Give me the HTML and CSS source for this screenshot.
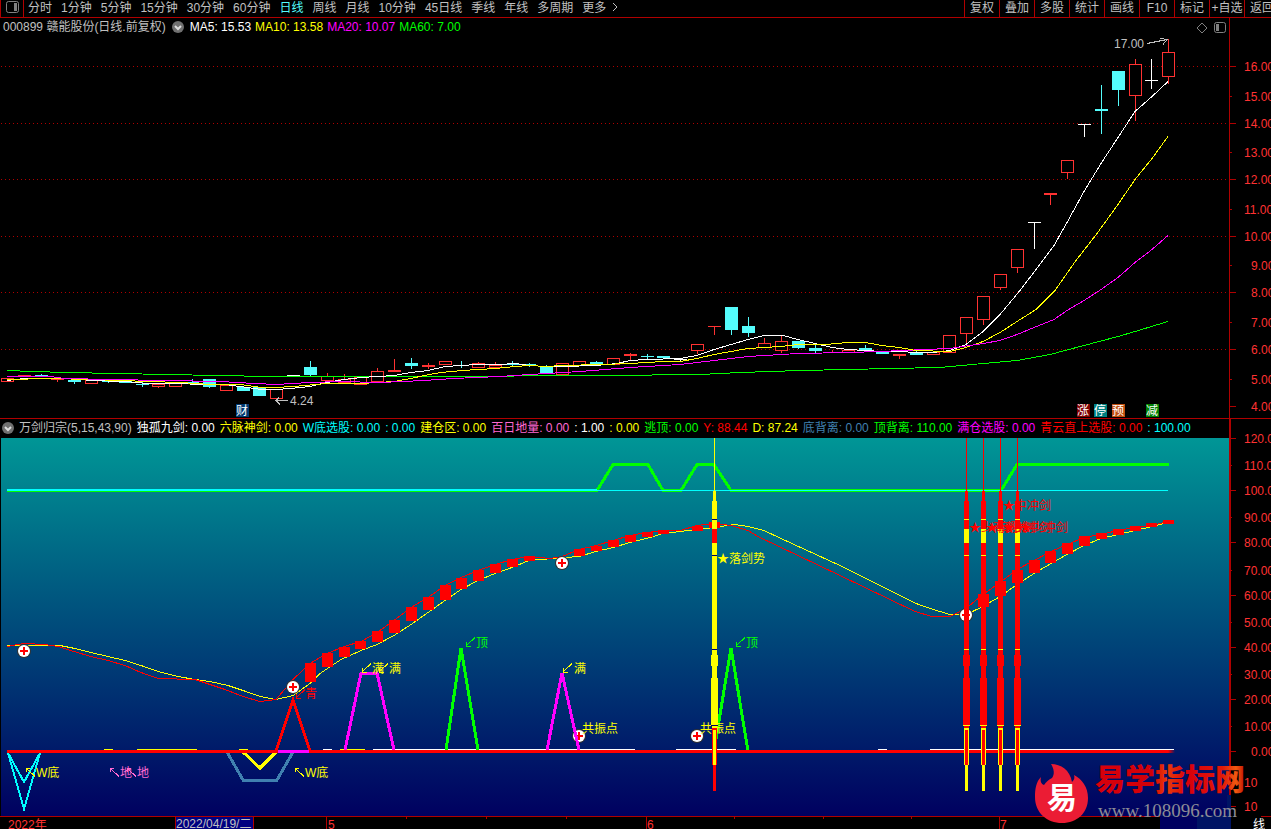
FILE: index.html
```html
<!DOCTYPE html>
<html lang="zh-CN">
<head>
  <meta charset="UTF-8" />
  <meta name="viewport" content="width=device-width, initial-scale=1.0"/>
  <title>赣能股份 000899 日线</title>
  <link rel="stylesheet" href="styles.css">
</head>
<body>

<nav class="toolbar">
  <button class="layout-btn" aria-label="布局">
    <svg width="13" height="12" viewBox="0 0 13 12"><rect x=".5" y=".5" width="12" height="11" rx="2"/><rect class="solid" x="8" y="2" width="3" height="8"/></svg>
  </button>
  <div class="periods">
    <button>分时</button><button>1分钟</button><button>5分钟</button><button>15分钟</button><button>30分钟</button><button>60分钟</button><button class="active">日线</button><button>周线</button><button>月线</button><button>10分钟</button><button>45日线</button><button>季线</button><button>年线</button><button>多周期</button><button class="more">更多<svg width="6" height="10" viewBox="0 0 6 10"><path d="M1 1l4 4-4 4"/></svg></button>
  </div>
  <div class="tools">
    <button>复权</button><button>叠加</button><button>多股</button><button>统计</button><button>画线</button><button>F10</button><button>标记</button><button>+自选</button><button class="cut">返回</button>
  </div>
</nav>

<main>
  <section class="pane price">
    <header class="legend">
      <span>000899 赣能股份(日线.前复权)</span>
      <button class="drop" aria-label="展开"><svg width="12" height="12" viewBox="0 0 12 12"><circle cx="6" cy="6" r="6"/><path d="M3 5l3 3 3-3"/></svg></button>
      <span class="white">MA5: 15.53</span>
      <span class="yellow">MA10: 13.58</span>
      <span class="magenta">MA20: 10.07</span>
      <span class="green">MA60: 7.00</span>
      <span class="pane-tools">
        <svg width="12" height="12" viewBox="0 0 12 12"><path d="M6 1l5 5-5 5-5-5z"/></svg>
        <svg width="12" height="12" viewBox="0 0 12 12"><rect x=".5" y=".5" width="11" height="10" rx="2"/><rect class="solid" x="2" y="2" width="3" height="7"/></svg>
      </span>
    </header>
    <svg class="chart" viewBox="0 38 1271 380">
      <g class="grid">
        <path d="M1 66.5H1229M1 123.5H1229M1 179.5H1229M1 236.5H1229M1 292.5H1229M1 349.5H1229"/>
      </g>
      <g id="candles"></g>
      <g class="ma" transform="translate(0 .5)">
        <polyline class="s-green" points="7,370 33,371 66,372 117,373 167,374 217,375 270,376 424,376 605,375 700,374 740,372 800,370 848,369 890,368 940,367 983,363 1017,360 1050,354 1084,345 1118,336 1135,331 1168,321"/>
        <polyline class="s-white" points="7,380 24,378 75,378 90,380 125,381 147,383 175,383 205,384 225,384 240,386 262,389 276,389 290,388 310,386 327,382 344,379 361,377 378,376 394,375 411,372 428,370 445,366 461,365 478,364 500,364 515,363 530,365 546,366 562,366 596,365 617,363 630,360 647,359 680,358 697,355 714,349 731,344 748,339 764,335 783,335 798,339 815,343 832,347 848,349 865,350 882,351 899,351 916,352 933,352 950,350 966,344 983,331 1000,314 1020,290 1036,269 1054,245 1067,222 1084,191 1101,163 1118,137 1135,111 1152,96 1168,81"/>
        <polyline class="s-yellow" points="7,379 50,378 90,379 120,380 150,381 180,382 210,384 240,384 262,387 276,387 293,386 327,383 361,383 394,381 411,378 424,375 441,372 462,370 495,368 515,366 530,365 546,366 562,365 600,364 630,363 663,361 680,361 697,358 714,354 731,351 748,348 764,347 781,346 798,344 825,344 848,342 865,342 882,345 899,347 916,350 950,351 966,347 983,341 1000,332 1017,321 1036,309 1055,290 1076,260 1097,233 1118,204 1135,179 1152,158 1168,136"/>
        <polyline class="s-magenta" points="7,376 50,376 65,378 110,379 165,380 220,381 255,383 276,384 310,382 340,381 380,382 424,380 453,378 500,376 530,374 580,371 630,367 680,364 697,362 748,356 798,353 848,352 880,351 925,349 950,348 983,343 1000,340 1017,334 1034,327 1054,319 1067,310 1084,300 1101,289 1118,277 1135,262 1152,249 1168,235"/>
      </g>
      <g class="note">
        <text x="1114" y="48">17.00</text>
        <path d="M1147 43.5l20-4M1160 38.5l7 1-4 5"/>
        <text x="290" y="405">4.24</text>
        <path d="M288 400.5h-12M279 397.5l-3 3 4 4"/>
      </g>
      <g class="badges">
        <rect x="236" y="404" width="13" height="13" fill="#003870"/><text x="236" y="415">财</text>
        <rect x="1077" y="404" width="13" height="13" fill="#800000"/><text x="1077" y="415">涨</text>
        <rect x="1094" y="404" width="13" height="13" fill="#008080"/><text x="1094" y="415">停</text>
        <rect x="1112" y="404" width="13" height="13" fill="#c04f10"/><text x="1112" y="415">预</text>
        <rect x="1146" y="404" width="13" height="13" fill="#008000"/><text x="1146" y="415">减</text>
      </g>
      <g id="priceAxis" class="axis"><path d="M1229.5 38V418"/></g>
    </svg>
  </section>

  <section class="pane indicator">
    <header class="legend">
      <button class="drop" aria-label="展开"><svg width="12" height="12" viewBox="0 0 12 12"><circle cx="6" cy="6" r="6"/><path d="M3 5l3 3 3-3"/></svg></button>
      <span>万剑归宗(5,15,43,90)</span>
      <span class="white">独孤九剑: 0.00</span>
      <span class="yellow">六脉神剑: 0.00</span>
      <span class="cyan">W底选股: 0.00</span>
      <span class="cyan">: 0.00</span>
      <span class="yellow">建仓区: 0.00</span>
      <span class="pink">百日地量: 0.00</span>
      <span class="white">: 1.00</span>
      <span class="yellow">: 0.00</span>
      <span class="green">逃顶: 0.00</span>
      <span class="red">Y: 88.44</span>
      <span class="yellow">D: 87.24</span>
      <span class="steel">底背离: 0.00</span>
      <span class="green">顶背离: 110.00</span>
      <span class="magenta">满仓选股: 0.00</span>
      <span class="red">青云直上选股: 0.00</span>
      <span class="cyan">: 100.00</span>
    </header>
    <svg class="chart" viewBox="0 438 1271 378">
      <defs>
        <linearGradient id="sea" x1="0" y1="0" x2="0" y2="1">
          <stop offset="0" stop-color="#009696"/>
          <stop offset="1" stop-color="#000060"/>
        </linearGradient>
        <linearGradient id="fade"><stop offset="0" stop-color="#f00"/><stop offset="1" stop-color="#f00" stop-opacity="0"/></linearGradient>
        <g id="sword">
          <path class="blade" d="M-1 491h3v10h-3zM-2 501h5v227h-5zM-3 655h7v11h-7zM-3 678h7v47h-7z"/>
          <path class="trim" d="M-2 529h5v14h-5zM-2 728h5v37h-5z"/>
          <path class="blade" d="M-1 730h3v35h-3z"/>
          <path class="trim" d="M-1 765h3v26h-3z"/>
          <path class="mark" d="M-2 519h5v1h-5zM-2 555h5v1h-5zM-2 649h5v1h-5zM-3 725h7v1h-7z"/>
        </g>
        <g id="cross">
          <circle r="7" fill="#333"/><circle r="6" fill="#fff"/>
          <path d="M-4 0h8M0-4v8" stroke="#f00" stroke-width="2"/>
        </g>
        <path id="arrowDown" d="M10 0.5L1 9M1 5v4h5"/>
        <path id="arrowUp" d="M10 9.5L1 1M1 5v-4h4"/>
      </defs>
      <rect x="1" y="438" width="1228" height="378" fill="url(#sea)"/>

      <g class="thick">
        <polyline class="s-green" points="7,490.5 597,490.5 613,464.5 648,464.5 663,490.5 681,490.5 697,464.5 714,464.5 731,490.5 1001,490.5 1017,464.5 1169,464.5"/>
      </g>
      <path class="s-cyan pair" d="M7 490H597"/>
      <path class="s-cyan" d="M597 490.5H1168"/>

      <g transform="translate(0 .5)">
        <polyline class="s-yellow" points="7,645 24,645 60,645 75,648 91,652 108,656 125,660 141,665 158,671 178,676 195,679 210,681 228,685 243,690 260,696 276,699 293,695 310,683 320,673 341,659 361,650 377,644 394,635 411,624 428,612 445,600 461,589 478,580 495,573 512,567 529,560 553,558 579,556 596,551 613,547 630,542 650,537 663,533 697,529 714,527 734,524 748,526 764,530 781,538 840,565 916,603 930,608 950,614 966,614 983,606 1000,596 1017,584 1034,573 1051,563 1067,554 1084,545 1101,538 1118,534 1135,530 1152,526 1168,522"/>
        <polyline class="s-red" points="7,646 18,644 24,643 45,644 58,646 74,651 91,656 108,660 125,665 141,672 158,678 195,679 210,684 225,689 243,696 260,701 276,699 293,679 310,663 327,653 344,646 361,641 377,632 394,620 411,607 428,597 445,585 461,577 478,570 495,564 512,559 529,556 550,558 562,556 579,549 596,545 613,540 630,535 647,532 663,530 680,530 697,525 714,523 731,525 748,530 758,536 840,575 915,611 932,616 950,616 966,608 983,594 1000,582 1017,569 1034,560 1051,551 1067,544 1084,537 1101,534 1118,530 1135,527 1152,525 1168,521"/>
      </g>
      <g id="momentum" fill="#f00"></g>

      <path class="s-white" d="M323 749.5h9M373 749.5H635M676 749.5h60M878 749.5h9M930 749.5h244"/>
      <path class="s-yellow" d="M104 749.5h9M137 749.5h60M239 749.5h9M340 749.5h25"/>

      <use href="#cross" x="24" y="651"/>
      <use href="#cross" x="562" y="563"/>
      <use href="#cross" x="579" y="736"/>
      <use href="#cross" x="697" y="736"/>
      <use href="#cross" x="966" y="615"/>

      <g class="thick">
        <path class="s-steel" d="M227 752l16 28h34l16-28"/>
        <path class="s-yellow" d="M243 752l17 16 16-16"/>
        <path class="s-magenta" d="M345 750l16-77h16l17 77M547 750l15-77 17 77"/>
        <path class="s-green" d="M446 750l15-102 17 102M714 751l17-103 17 103"/>
        <path class="s-red" d="M7 751.5H1168M276 751l17-51 17 51"/>
        <path class="s-magenta" d="M278 751.5h31"/>
      </g>
      <rect x="1168" y="750" width="7" height="3" fill="url(#fade)"/>
      <path class="s-cyan pair" d="M8 753l16 56 16-56M8 753l16 29 16-29"/>
      <use href="#cross" x="293" y="687"/>

      <g class="arrows">
        <use class="s-red" href="#arrowDown" x="295" y="689"/>
        <use class="s-yellow" href="#arrowDown" x="361" y="663"/>
        <use class="s-yellow" href="#arrowDown" x="378" y="663"/>
        <use class="s-green" href="#arrowDown" x="465" y="637"/>
        <use class="s-yellow" href="#arrowDown" x="562" y="663"/>
        <use class="s-green" href="#arrowDown" x="735" y="637"/>
        <use class="s-yellow" href="#arrowUp" x="25" y="767"/>
        <use class="s-pink" href="#arrowUp" x="109" y="767"/>
        <use class="s-pink" href="#arrowUp" x="126" y="767"/>
        <use class="s-yellow" href="#arrowUp" x="294" y="767"/>
      </g>
      <g class="labels">
        <text class="red" x="305" y="698">青</text>
        <text class="yellow" x="372" y="673">满</text>
        <text class="yellow" x="389" y="673">满</text>
        <text class="green" x="476" y="647">顶</text>
        <text class="yellow" x="574" y="673">满</text>
        <text class="green" x="746" y="647">顶</text>
        <text class="yellow" x="582" y="733">共振点</text>
        <text class="yellow" x="700" y="733">共振点</text>
        <text class="yellow" x="36" y="777">W底</text>
        <text class="pink" x="120" y="777">地</text>
        <text class="pink" x="137" y="777">地</text>
        <text class="yellow" x="305" y="777">W底</text>
      </g>

      <g class="yellow-sword">
        <path class="blade" d="M714 438h1v53h-1z"/>
        <use href="#sword" x="714"/>
      </g>
      <g class="red-sword">
        <path class="blade" d="M966 438h1v53h-1zM983 438h1v53h-1zM1000 438h1v53h-1zM1017 438h1v53h-1z"/>
        <use href="#sword" x="966"/>
        <use href="#sword" x="983"/>
        <use href="#sword" x="1000"/>
        <use href="#sword" x="1017"/>
      </g>
      <g class="labels">
        <text class="yellow" x="717" y="563">★落剑势</text>
        <text class="red" x="1003" y="510">★中冲剑</text>
        <text class="red" x="969" y="532">★少商剑</text>
        <text class="red" x="986" y="532">★商阳剑</text>
        <text class="red" x="1003" y="532">★关冲剑</text>
        <text class="red" x="1020" y="532">★少冲剑</text>
      </g>
      <g id="valueAxis" class="axis"><path class="bold" d="M1230 438V816"/></g>
    </svg>
  </section>

  <footer class="dates">
    <svg class="chart" viewBox="0 817 1271 12">
      <path class="tick" d="M326.5 817v12M646.5 817v12M999.5 817v12M406.5 817v2M486.5 817v2M566.5 817v2M734.5 817v2M823.5 817v2M911.5 817v2M1230 817v12"/>
      <rect class="cursor" x="175.5" y="816.5" width="78" height="14"/>
      <text x="8" y="829">2022年</text>
      <text class="picked" x="176" y="828">2022/04/19/二</text>
      <text x="328" y="829">5</text>
      <text x="647" y="829">6</text>
      <text x="1000" y="829">7</text>
    </svg>
  </footer>

  <svg class="watermark" width="240" height="70" viewBox="1031 759 240 70">
    <defs>
      <linearGradient id="brush" x1="0" y1="0" x2="1" y2="0">
        <stop offset="0" stop-color="#d8000c"/><stop offset=".38" stop-color="#d20008"/><stop offset=".48" stop-color="#e83a08"/>
        <stop offset=".62" stop-color="#d8000c"/><stop offset=".85" stop-color="#e01808"/><stop offset=".94" stop-color="#f05a10"/><stop offset="1" stop-color="#c01000"/>
      </linearGradient>
    </defs>
    <path fill="#001464" d="M1160 815h71v14h-71z"/>
    <path fill="#000060" d="M1160 816h37v13h-37z"/>
    <path fill="#001464" d="M1227 795h4v22h-4z"/>
    <path fill="#000" d="M1231 815h30v14h-30z"/>
    <path fill="#eb1c34" d="M1051 764c10 0 19 6 21 18 2-2 3-4 2-7 8 4 14 12 14 23 0 15-11 25-26 25s-27-10-27-26c0-8 1-15 6-20-1 4 0 7 3 8 2-3 4-5 8-7 3-4 2-9-1-14z"/>
    <text class="seal" x="1047" y="808">易</text>
    <text class="brand" x="1095" y="790">易学指标网</text>
    <text class="site" x="1098" y="817">www.108096.com</text>
    <text class="unit" x="1253" y="829">线</text>
  </svg>
</main>

<script>
  const STEP = 16.83;

  // [body top, body bottom, high, low, kind]
  // u = hollow up, r = solid up, d = down, w = flat
  const bars = [
    [378,381,378,381,'u'], [375,376,375,376,'r'], [375,377,374,377,'d'], [379,380,379,382,'r'],
    [380,382,380,384,'d'], [380,383,380,384,'u'], [380,382,380,383,'d'], [381,383,381,383,'d'],
    [384,385,382,387,'d'], [384,386,384,388,'u'], [382,386,382,386,'u'], [382,383,379,383,'d'],
    [379,387,379,388,'d'], [385,390,385,390,'u'], [387,391,386,391,'d'], [387,396,387,396,'d'],
    [389,398,389,398,'u'], [375,376,375,376,'w'], [367,375,361,376,'d'], [376,380,373,380,'u'],
    [379,382,374,382,'u'], [377,384,377,384,'u'], [371,381,368,381,'u'], [370,372,359,372,'r'],
    [363,366,358,369,'d'], [365,367,363,369,'r'], [361,364,361,365,'u'], [365,366,361,368,'d'],
    [363,367,362,367,'u'], [365,367,362,367,'u'], [364,365,361,367,'d'], [364,366,363,367,'d'],
    [366,373,365,373,'d'], [363,374,363,374,'u'], [361,365,361,365,'u'], [362,364,361,364,'d'],
    [358,364,358,364,'u'], [354,356,353,360,'r'], [356,357,354,359,'d'], [356,358,356,358,'d'],
    [359,360,358,361,'w'], [344,350,344,354,'u'], [326,327,326,335,'r'], [307,330,307,335,'d'],
    [326,333,317,337,'d'], [343,347,338,347,'u'], [341,350,336,353,'u'], [341,348,341,349,'d'],
    [348,351,344,353,'d'], [352,353,350,353,'r'], [350,352,350,352,'u'], [348,350,345,350,'d'],
    [351,354,351,354,'d'], [354,356,354,359,'r'], [353,355,350,355,'d'], [352,354,352,354,'u'],
    [335,352,335,352,'u'], [317,333,317,345,'u'], [296,319,296,325,'u'], [274,287,274,290,'u'],
    [249,267,249,273,'u'], [222,223,222,249,'w'], [193,195,193,205,'r'], [160,172,160,179,'u'],
    [124,125,124,137,'w'], [109,111,85,134,'d'], [71,90,71,106,'d'], [64,95,59,121,'u'],
    [80,81,59,89,'w'], [52,76,39,84,'u']
  ];

  // index: [top, bottom] of the momentum blocks
  const blocks = {
    18:[663,682], 19:[653,667], 20:[647,657], 21:[641,649], 22:[631,642], 23:[620,633], 24:[607,621],
    25:[597,610], 26:[585,600], 27:[578,589], 28:[570,581], 29:[564,573], 30:[559,567], 31:[556,561],
    34:[549,556], 35:[546,551], 36:[540,547], 37:[535,542], 38:[532,537], 39:[530,534], 41:[526,531],
    42:[522,528], 58:[594,607], 59:[581,596], 60:[570,583], 61:[560,573], 62:[551,563], 63:[543,554],
    64:[536,546], 65:[533,539], 66:[529,535], 67:[526,531], 68:[523,527], 69:[520,524]
  };

  const barX = i => Math.round(7 + i * STEP);

  document.getElementById('candles').innerHTML = bars.map(([top, bottom, high, low, kind], i) => {
    const x = barX(i);
    const body = kind === 'u'
      ? `<rect x="${x - 5.5}" y="${top + 0.5}" width="12" height="${bottom - top}"/>`
      : `<rect x="${x - 6}" y="${top}" width="13" height="${bottom - top}"/>`;
    return `<g class="k-${kind}"><path d="M${x + 0.5} ${high}V${low}"/>${body}</g>`;
  }).join('');

  document.getElementById('momentum').innerHTML = Object.entries(blocks).map(([i, [top, bottom]]) =>
    `<rect x="${barX(+i) - 5}" y="${top}" width="11" height="${bottom - top}"/>`
  ).join('');

  function drawAxis(id, rows) {
    document.getElementById(id).innerHTML += rows.map(([label, y, x], i) =>
      `<path d="M1230 ${y + 0.5}h${i % 2 ? 2 : 6}"/><text x="${x}" y="${y + 5}">${label}</text>`
    ).join('');
  }

  drawAxis('priceAxis', [
    ['16.00', 66, 1244], ['15.00', 96, 1244], ['14.00', 123, 1244], ['13.00', 152, 1244],
    ['12.00', 179, 1244], ['11.00', 209, 1244], ['10.00', 236, 1244], ['9.00', 265, 1251],
    ['8.00', 292, 1251], ['7.00', 322, 1251], ['6.00', 349, 1251], ['5.00', 379, 1251], ['4.00', 406, 1251]
  ]);
  drawAxis('valueAxis', [
    ['120.00', 438, 1244], ['110.00', 465, 1244], ['100.00', 490, 1244], ['90.00', 517, 1244],
    ['80.00', 542, 1244], ['70.00', 570, 1244], ['60.00', 595, 1244], ['50.00', 622, 1244],
    ['40.00', 647, 1244], ['30.00', 674, 1244], ['20.00', 699, 1244], ['10.00', 726, 1244],
    ['0.00', 751, 1251], ['10', 782, 1244], ['10', 806, 1244]
  ]);
</script>

</body>
</html>
```

FILE: styles.css
```css
:root {
  --line: #b00000;
  --text: #c0c0c0;
  --axis: #ff3232;
  --up: #ff3232;
  --down: #54fcfc;
}

body {
  margin: 0;
  background: #000;
  color: var(--text);
  font: 12px/14px "Liberation Sans", "Noto Sans CJK SC", sans-serif;
  overflow: hidden;
}

button {
  margin: 0;
  padding: 0;
  border: none;
  background: none;
  color: inherit;
  font: inherit;
  white-space: nowrap;
  cursor: pointer;
}

/* toolbar */
.toolbar {
  display: flex;
  height: 17px;
  border-bottom: 1px solid var(--line);
  overflow: hidden;
}

.layout-btn {
  width: 24px;
  box-sizing: border-box;
  border-left: 1px solid var(--line);
  border-right: 1px solid var(--line);
}

.layout-btn svg {
  display: block;
  margin: 0 auto 4px;
}

.layout-btn rect,
.pane-tools rect,
.pane-tools path {
  fill: none;
  stroke: #808080;
}

.layout-btn .solid,
.pane-tools .solid {
  fill: #808080;
  stroke: none;
}

.periods {
  display: flex;
  gap: 9px;
  padding: 1px 0 0 4px;
  align-items: flex-start;
}

.periods .active {
  color: var(--down);
}

.more svg {
  margin-left: 6px;
}

.more path {
  fill: none;
  stroke: var(--text);
}

.tools {
  display: flex;
  margin-left: auto;
  align-items: stretch;
}

.tools button {
  width: 35px;
  box-sizing: border-box;
  padding-bottom: 1px;
  border-left: 1px solid var(--line);
}

.tools .cut {
  width: 27px;
  padding-left: 5px;
  text-align: left;
  overflow: hidden;
}

/* panes */
main {
  position: relative;
}

.legend {
  display: flex;
  gap: 4px;
  height: 20px;
  line-height: 18px;
  padding-left: 3px;
  margin-right: 41px;
  border-right: 1px solid var(--line);
  white-space: nowrap;
}

.price {
  border-bottom: 1px solid var(--line);
}

.price .drop {
  margin: 0 2px;
}

.indicator .legend {
  height: 19px;
  gap: 5px;
  padding-left: 2px;
  margin-right: 40px;
  border-right-width: 2px;
}

.drop {
  display: flex;
  align-items: center;
  height: 18px;
}

.drop circle {
  fill: #707070;
}

.drop path {
  fill: none;
  stroke: #ddd;
  stroke-width: 2;
}

.pane-tools {
  display: flex;
  gap: 6px;
  margin-left: auto;
  padding: 4px 3px 0 0;
}

.chart {
  display: block;
  width: 100%;
  overflow: visible;
}

.chart path,
.chart polyline {
  fill: none;
  shape-rendering: crispEdges;
}

.grid path {
  stroke: var(--line);
  stroke-dasharray: 1 3;
}

.k-u { stroke: var(--up); fill: #000; }
.k-r { stroke: var(--up); fill: var(--up); }
.k-d { stroke: var(--down); fill: var(--down); }
.k-w { stroke: #fff; fill: #fff; }

#candles rect {
  shape-rendering: crispEdges;
}

.k-r rect,
.k-d rect,
.k-w rect {
  stroke: none;
}

.s-white { stroke: #fff; }
.s-yellow { stroke: #ff0; }
.s-magenta { stroke: #f0f; }
.s-green { stroke: #0f0; }
.s-cyan { stroke: #0ff; }
.s-red { stroke: #f00; }
.s-pink { stroke: #ff69d2; }
.s-steel { stroke: #4080b0; }

.white { color: #fff; fill: #fff; }
.yellow { color: #ff0; fill: #ff0; }
.magenta { color: #f0f; fill: #f0f; }
.green { color: #0f0; fill: #0f0; }
.cyan { color: #0ff; fill: #0ff; }
.red { color: #f00; fill: #f00; }
.pink { color: #ff69d2; fill: #ff69d2; }
.steel { color: #4080b0; fill: #4080b0; }

.thick polyline,
.thick path {
  stroke-width: 3;
}

.pair {
  stroke-width: 2;
}

.note text {
  fill: var(--text);
}

.note path {
  stroke: var(--text);
}

.badges text {
  fill: #fff;
}

.axis path {
  stroke: var(--line);
}

.axis .bold {
  stroke-width: 2;
}

.axis text,
.dates text {
  fill: var(--axis);
}

/* swords */
.yellow-sword {
  --blade: #ff0;
  --trim: #f00;
  --mark: #000060;
}

.red-sword {
  --blade: #f00;
  --trim: #ff0;
  --mark: #ff0;
}

.chart .blade { fill: var(--blade); }
.chart .trim { fill: var(--trim); }
.chart .mark { fill: var(--mark); }

/* date row */
.dates {
  border-top: 1px solid var(--line);
}

.dates .tick {
  stroke: var(--line);
}

.dates .cursor {
  fill: #000080;
  stroke: var(--line);
}

.dates .picked {
  fill: var(--text);
}

.watermark {
  position: absolute;
  right: 0;
  bottom: 0;
}

.seal {
  fill: #fff;
  font-size: 30px;
  font-weight: 700;
}

.brand {
  fill: url(#brush);
  font-size: 30px;
  font-weight: 900;
}

.site {
  fill: #8c8c96;
  font-family: "Liberation Serif", serif;
  font-size: 19px;
}

.unit {
  fill: #fff;
}
```
